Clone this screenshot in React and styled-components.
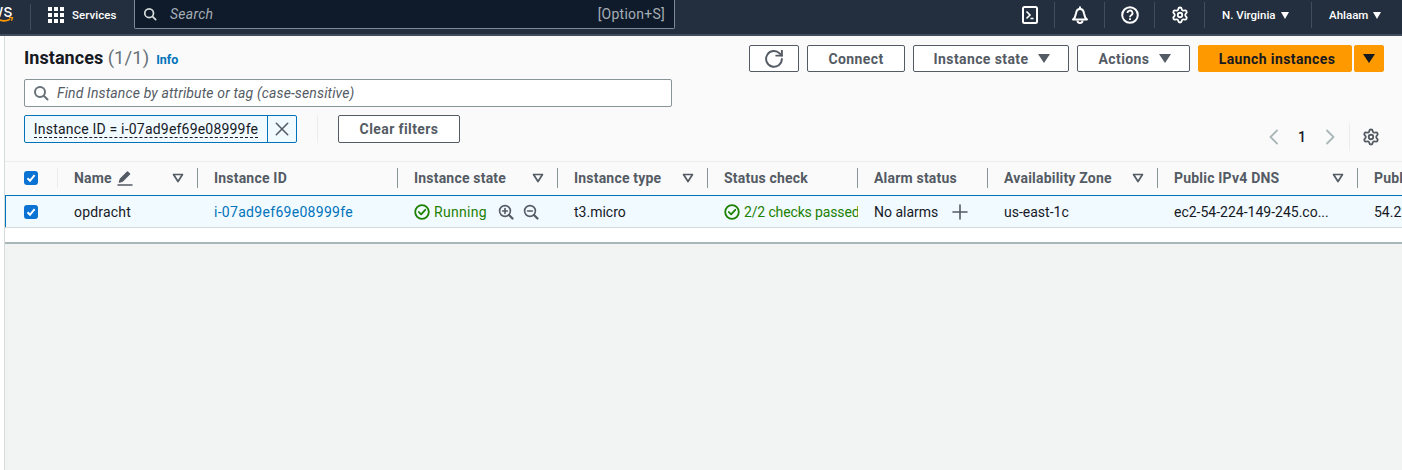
import React from "react"
import styled, { createGlobalStyle } from "styled-components"
import { Settings } from "lucide-react"

const GlobalStyle = createGlobalStyle`
  html, body {
    margin: 0;
    padding: 0;
    height: 100%;
    background: #fff;
    overflow: hidden;
  }
  body {
    font-family: Roboto, "Liberation Sans", sans-serif;
    font-size: 14px;
    color: #16191f;
  }
  #root { height: 100%; }
  * { box-sizing: border-box; }
`

const Page = styled.div`
  height: 470px;
  display: flex;
  flex-direction: column;
`

/* top bar */
const Nav = styled.header`
  height: 36px;
  flex: none;
  display: flex;
  align-items: flex-start;
  background: #232f3e;
  border-bottom: 2px solid #414d5c;
  color: #fff;
`
const LogoClip = styled.div`
  width: 31px;
  height: 26px;
  margin-top: 4px;
  border-right: 1px solid #414d5c;
  overflow: hidden;
`
const LogoText = styled.span`
  display: block;
  margin-left: -20px;
  font-size: 18px;
  font-weight: 400;
  line-height: 13px;
  height: 13px;
`
const Smile = styled.svg`
  display: block;
  width: 14px;
  height: 6px;
`
const Services = styled.div`
  display: flex;
  align-items: center;
  gap: 8px;
  height: 30px;
  padding-left: 17px;
  width: 103px;
  font-size: 11.5px;
  font-weight: 500;
  letter-spacing: 0.05px;
`
const NavSearch = styled.div`
  width: 541px;
  height: 29px;
  display: flex;
  align-items: center;
  gap: 13px;
  padding: 0 9px 0 8px;
  background: #0f1b2a;
  border: 1px solid #7d8998;
  border-top: none;
  border-radius: 0 0 2px 2px;
  color: #a5adb6;
  font-size: 14px;
  letter-spacing: 0.25px;
`
const Placeholder = styled.span`
  flex: 1;
  font-style: italic;
`
const NavRight = styled.div`
  margin-left: auto;
  display: flex;
  align-items: center;
  height: 30px;
  padding-right: 15px;
`
const NavIcon = styled.div`
  width: 50px;
  height: 26px;
  display: flex;
  align-items: center;
  justify-content: center;
  border-right: 1px solid #414d5c;
`
const NavMenu = styled.div`
  width: ${(p) => p.$width}px;
  height: 26px;
  display: flex;
  align-items: center;
  gap: 5px;
  padding-left: 17px;
  font-size: 11.5px;
  font-weight: 500;
  border-right: ${(p) => (p.$last ? "none" : "1px solid #414d5c")};
`
const Caret = styled.span`
  width: 0;
  height: 0;
  border-left: ${(p) => p.$size || 4.5}px solid transparent;
  border-right: ${(p) => p.$size || 4.5}px solid transparent;
  border-top: ${(p) => (p.$size ? p.$size * 1.5 : 7)}px solid ${(p) => p.$color || "#fff"};
`

/* main panel */
const Body = styled.main`
  flex: 1;
  display: flex;
  padding-left: 4px;
`
const Panel = styled.div`
  flex: 1;
  min-width: 0;
  display: flex;
  flex-direction: column;
  border-left: 1px solid #d5dbdb;
  background: #f2f3f3;
`
const Head = styled.section`
  height: 126px;
  display: flex;
  justify-content: space-between;
  padding: 8px 18px 0 19px;
  background: #fafafa;
  border-bottom: 1px solid #eaeded;
`
const HeadLeft = styled.div`
  width: 648px;
  display: flex;
  flex-direction: column;
`
const TitleRow = styled.div`
  height: 28px;
  margin-bottom: 7px;
  display: flex;
  align-items: center;
  gap: 7px;
`
const Title = styled.h1`
  margin: 0;
  font-size: 18px;
  font-weight: 700;
  letter-spacing: 0.05px;
  span {
    font-weight: 400;
    font-size: 18.5px;
    color: #687078;
  }
`
const InfoLink = styled.a`
  color: #0073bb;
  font-size: 12.5px;
  font-weight: 700;
  margin-top: 3px;
`
const SearchBox = styled.div`
  height: 28px;
  display: flex;
  align-items: center;
  gap: 8px;
  padding: 0 8px;
  background: #fff;
  border: 1px solid #879596;
  border-radius: 2px;
  color: #545b64;
  font-size: 14px;
  letter-spacing: 0.14px;
`
const FilterRow = styled.div`
  display: flex;
  align-items: center;
  height: 28px;
  margin-top: 8px;
`
const Token = styled.div`
  display: flex;
  height: 28px;
  background: #f1faff;
  border: 1px solid #0073bb;
  border-radius: 2px;
`
const TokenLabel = styled.div`
  width: 243px;
  display: flex;
  align-items: center;
  justify-content: center;
  border-right: 1px solid #0073bb;
  font-size: 14px;
  letter-spacing: 0.2px;
  color: #16191f;
  span {
    border-bottom: 1px dashed #16191f;
    line-height: 16px;
    white-space: nowrap;
  }
`
const TokenClose = styled.div`
  width: 28px;
  display: flex;
  align-items: center;
  justify-content: center;
  color: #545b64;
`
const VSep = styled.div`
  width: 1px;
  height: 28px;
  margin: 0 20px;
  background: #eaeded;
`
const Button = styled.button`
  height: ${(p) => (p.$small ? 28 : 27)}px;
  width: ${(p) => p.$width}px;
  display: flex;
  align-items: center;
  justify-content: center;
  gap: 10px;
  background: #fff;
  border: 1px solid #545b64;
  border-radius: 2px;
  color: #545b64;
  font-family: inherit;
  font-size: 14px;
  font-weight: 700;
  letter-spacing: 0.4px;
  padding: 0 0 0 ${(p) => p.$shift || 0}px;
`
const HeadRight = styled.div`
  display: flex;
  flex-direction: column;
  align-items: flex-end;
  padding-top: 1px;
`
const Actions = styled.div`
  display: flex;
  gap: 8px;
`
const LaunchGroup = styled.div`
  display: flex;
  gap: 2px;
`
const Orange = styled(Button)`
  background: #ff9900;
  border-color: #ff9900;
  color: #16191f;
`
const Pager = styled.div`
  display: flex;
  align-items: center;
  height: 28px;
  margin-top: 51px;
  margin-right: 4px;
  font-size: 14px;
`
const PageNumber = styled.span`
  width: 40px;
  text-align: center;
  font-weight: 500;
`
const PagerSep = styled.div`
  width: 1px;
  height: 28px;
  margin: 0 12px 0 11px;
  background: #eaeded;
`

/* table */
const TableClip = styled.div`
  overflow: hidden;
  background: #fff;
  height: 82px;
  border-bottom: 2px solid #aab7b8;
`
const HeaderRow = styled.div`
  width: 1500px;
  height: 33px;
  padding-bottom: 2px;
  display: flex;
  align-items: center;
  background: #fafafa;
`
const CheckCell = styled.div`
  width: ${(p) => p.$width}px;
  flex: none;
  padding-left: 19px;
  height: 100%;
  display: flex;
  align-items: center;
`
const HeaderCheckCell = styled(CheckCell)`
  height: 20px;
  border-right: 1px solid #eaeded;
`
const HeaderCell = styled.div`
  width: ${(p) => p.$width}px;
  flex: none;
  height: 20px;
  padding: 0 13px 0 16px;
  display: flex;
  align-items: center;
  border-right: 1px solid #879596;
  color: #545b64;
  font-weight: 700;
  font-size: 14px;
  letter-spacing: 0.2px;
  white-space: nowrap;
`
const Row = styled.div`
  width: 1500px;
  height: 33px;
  display: flex;
  align-items: center;
  background: #f1faff;
  border-top: 1px solid #0073bb;
  border-bottom: 1px solid #d5dbdb;
  box-shadow: inset 1px 0 0 #0073bb;
`
const Cell = styled.div`
  width: ${(p) => p.$width}px;
  flex: none;
  padding-left: 16px;
  display: flex;
  align-items: center;
  white-space: nowrap;
  overflow: hidden;
  font-size: 14px;
  letter-spacing: ${(p) => p.$spacing || 0}px;
  color: ${(p) => p.$color || "#16191f"};
`
const Status = styled.span`
  display: flex;
  align-items: center;
  gap: 4px;
  color: #1d8102;
  letter-spacing: ${(p) => p.$spacing || 0}px;
`
const Checkbox = styled.span`
  width: 14px;
  height: 14px;
  border-radius: 3px;
  background: #0972d3;
  display: flex;
  align-items: center;
  justify-content: center;
`
const Spacer = styled.div`
  flex: 1;
`
const CaretSlot = styled.span`
  margin-left: auto;
  display: flex;
`
const InlineIcon = styled.span`
  display: flex;
  margin-left: ${(p) => p.$gap || 0}px;
`

const columns = [
  { key: "name", width: 140, caret: true },
  { key: "id", label: "Instance ID", width: 200 },
  { key: "state", label: "Instance state", width: 160, caret: true },
  { key: "type", label: "Instance type", width: 150, caret: true },
  { key: "status", label: "Status check", width: 150 },
  { key: "alarm", label: "Alarm status", width: 130 },
  { key: "az", label: "Availability Zone", width: 170, caret: true },
  { key: "dns", label: "Public IPv4 DNS", width: 200, caret: true },
  { key: "ip", label: "Public IPv4 address", width: 170 },
]

const Icon = ({ size = 16, color = "currentColor", width = 2, children }) => (
  <svg width={size} height={size} viewBox="0 0 16 16" fill="none" stroke={color} strokeWidth={width} strokeLinecap="round" strokeLinejoin="round">
    {children}
  </svg>
)

const SearchIcon = (props) => (
  <Icon {...props}>
    <circle cx="7" cy="7" r="5" />
    <path d="M11 11l3.5 3.5" />
  </Icon>
)

const Check = () => (
  <svg width="10" height="10" viewBox="0 0 10 10" fill="none" stroke="#fff" strokeWidth="2">
    <path d="M1.5 5.2L4 7.8 8.6 2.2" />
  </svg>
)

const StatusOk = () => (
  <Icon size={16} width={1.8}>
    <circle cx="8" cy="8" r="6.8" />
    <path d="M4.8 8l2.3 2.4 4.2-4.6" />
  </Icon>
)

const FilterCaret = () => (
  <svg width="12" height="12" viewBox="0 0 12 12" fill="none" stroke="#545b64" strokeWidth="1.7" strokeLinejoin="round">
    <path d="M1.5 2.5h9L6 9.5z" />
  </svg>
)

const Grid = () => (
  <svg width="16" height="16" viewBox="0 0 16 16" fill="#fff">
    {[0, 6, 12].map((y) =>
      [0, 6, 12].map((x) => <rect key={`${x}-${y}`} x={x} y={y} width="4" height="4" />)
    )}
  </svg>
)

const Zoom = ({ plus }) => (
  <Icon size={16} color="#545b64" width={1.6}>
    <circle cx="7" cy="7" r="5.4" />
    <path d="M11 11l3.5 3.5" strokeWidth="2.2" />
    <path d="M4.6 7h4.8" />
    {plus && <path d="M7 4.6v4.8" />}
  </Icon>
)

const Chevron = ({ left }) => (
  <Icon size={16} color="#aab7b8" width={1.8}>
    <path d={left ? "M11 1.5L4.5 8l6.5 6.5" : "M5 1.5L11.5 8 5 14.5"} />
  </Icon>
)

const App = () => {
  const cells = {
    name: <Cell $width={140} $spacing={0.2}>opdracht</Cell>,
    id: <Cell $width={200} $spacing={0.3} $color="#0073bb">i-07ad9ef69e08999fe</Cell>,
    state: (
      <Cell $width={160}>
        <Status $spacing={0.3}><StatusOk />Running</Status>
        <InlineIcon $gap={11}><Zoom plus /></InlineIcon>
        <InlineIcon $gap={9}><Zoom /></InlineIcon>
      </Cell>
    ),
    type: <Cell $width={150}>t3.micro</Cell>,
    status: <Cell $width={150}><Status $spacing={-0.14}><StatusOk />2/2 checks passed</Status></Cell>,
    alarm: (
      <Cell $width={130}>
        No alarms
        <InlineIcon $gap={14}>
          <Icon size={16} color="#545b64" width={1.6}><path d="M8 1v14M1 8h14" /></Icon>
        </InlineIcon>
      </Cell>
    ),
    az: <Cell $width={170}>us-east-1c</Cell>,
    dns: <Cell $width={200}>ec2-54-224-149-245.co...</Cell>,
    ip: <Cell $width={170}>54.224.149.245</Cell>,
  }

  return (
    <Page>
      <GlobalStyle />
      <Nav>
        <LogoClip>
          <LogoText>aws</LogoText>
          <Smile viewBox="0 0 14 6" fill="none">
            <path d="M-4 1c5 3.5 10 3.5 14 1.2" stroke="#ff9900" strokeWidth="1.6" />
            <path d="M9 .5l3.5.2-1 3" stroke="#ff9900" strokeWidth="1.3" />
          </Smile>
        </LogoClip>
        <Services>
          <Grid />
          Services
        </Services>
        <NavSearch>
          <SearchIcon size={14} color="#d5dbdb" />
          <Placeholder>Search</Placeholder>
          [Option+S]
        </NavSearch>
        <NavRight>
          <NavIcon>
            <svg width="16" height="18" viewBox="0 0 16 18" fill="none" stroke="#fff" strokeWidth="2">
              <rect x="1" y="1" width="14" height="16" rx="1.5" />
              <path d="M4.5 5.5L8 9l-3.5 3.5" strokeWidth="1.6" />
              <path d="M8.5 12.5h3" strokeWidth="1.6" />
            </svg>
          </NavIcon>
          <NavIcon>
            <svg width="18" height="18" viewBox="0 0 18 18" fill="none" stroke="#fff" strokeWidth="2" strokeLinejoin="round">
              <path d="M2 13.5c2-1.5 2.5-3 3-6C5.4 4.5 7 3 9 3s3.6 1.5 4 4.5c.5 3 1 4.5 3 6z" />
              <path d="M9 .5V3" />
              <path d="M6.5 14.5a2.5 2.5 0 0 0 5 0" />
            </svg>
          </NavIcon>
          <NavIcon>
            <svg width="18" height="18" viewBox="0 0 18 18" fill="none" stroke="#fff" strokeWidth="2">
              <circle cx="9" cy="9" r="7.8" />
              <path d="M6.5 7a2.5 2.5 0 1 1 3.7 2.2c-.8.5-1.2 1-1.2 2" strokeWidth="1.8" />
              <path d="M9 12.3V14" strokeWidth="1.8" />
            </svg>
          </NavIcon>
          <NavIcon>
            <Settings size={18} color="#fff" strokeWidth={2.4} />
          </NavIcon>
          <NavMenu $width={107}>N. Virginia <Caret /></NavMenu>
          <NavMenu $width={75} $last>Ahlaam <Caret /></NavMenu>
        </NavRight>
      </Nav>

      <Body>
        <Panel>
          <Head>
            <HeadLeft>
              <TitleRow>
                <Title>Instances <span>(1/1)</span></Title>
                <InfoLink>Info</InfoLink>
              </TitleRow>
              <SearchBox>
                <SearchIcon color="#687078" />
                <Placeholder>Find Instance by attribute or tag (case-sensitive)</Placeholder>
              </SearchBox>
              <FilterRow>
                <Token>
                  <TokenLabel><span>Instance ID = i-07ad9ef69e08999fe</span></TokenLabel>
                  <TokenClose>
                    <Icon size={14} width={1.8}><path d="M1.5 1.5l13 13M14.5 1.5l-13 13" /></Icon>
                  </TokenClose>
                </Token>
                <VSep />
                <Button $width={122} $small>Clear filters</Button>
              </FilterRow>
            </HeadLeft>
            <HeadRight>
              <Actions>
                <Button $width={50} aria-label="Refresh">
                  <Icon size={18} width={1.7}>
                    <path d="M10 5h5V0" />
                    <path d="M15 8a7 7 0 1 1-2-5l2 2" />
                  </Icon>
                </Button>
                <Button $width={98}>Connect</Button>
                <Button $width={156} $shift={2}>Instance state <Caret $size={6.5} $color="#545b64" /></Button>
                <Button $width={113} $shift={3}>Actions <Caret $size={6.5} $color="#545b64" /></Button>
                <LaunchGroup>
                  <Orange $width={154} $shift={4}>Launch instances</Orange>
                  <Orange $width={30}><Caret $size={6} $color="#16191f" /></Orange>
                </LaunchGroup>
              </Actions>
              <Pager>
                <Chevron left />
                <PageNumber>1</PageNumber>
                <Chevron />
                <PagerSep />
                <Settings size={18} color="#545b64" strokeWidth={2.4} />
              </Pager>
            </HeadRight>
          </Head>

          <TableClip>
            <HeaderRow>
              <HeaderCheckCell $width={53}>
                <Checkbox><Check /></Checkbox>
              </HeaderCheckCell>
              {columns.map((col) => (
                <HeaderCell key={col.key} $width={col.width}>
                  {col.key === "name" ? (
                    <>
                      Name
                      <InlineIcon $gap={5}>
                        <Icon size={16} color="#545b64" width={1.5}>
                          <path d="M1 15h14" />
                          <path d="M2.5 12l1-3 7-7 2 2-7 7z" fill="#545b64" />
                        </Icon>
                      </InlineIcon>
                    </>
                  ) : (
                    col.label
                  )}
                  {col.caret && <CaretSlot><FilterCaret /></CaretSlot>}
                </HeaderCell>
              ))}
            </HeaderRow>
            <Row>
              <CheckCell $width={53}>
                <Checkbox><Check /></Checkbox>
              </CheckCell>
              {columns.map((col) => React.cloneElement(cells[col.key], { key: col.key }))}
            </Row>
          </TableClip>
          <Spacer />
        </Panel>
      </Body>
    </Page>
  )
}

export default App
